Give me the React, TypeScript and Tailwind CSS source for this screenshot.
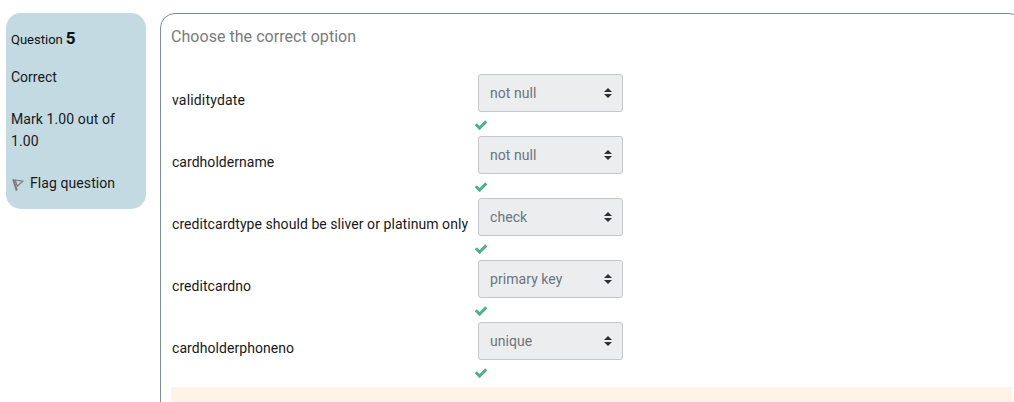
const rows = [
  { label: 'validitydate', value: 'not null', spacing: 'tracking-[0.17px]' },
  { label: 'cardholdername', value: 'not null', spacing: 'tracking-[0.04px]' },
  { label: 'creditcardtype should be sliver or platinum only', value: 'check', spacing: 'tracking-[0.06px]' },
  { label: 'creditcardno', value: 'primary key', spacing: 'tracking-[0.06px]' },
  { label: 'cardholderphoneno', value: 'unique', spacing: 'tracking-[0.06px]' },
];

function CheckIcon() {
  return (
    <svg viewBox="0 0 1792 1792" className="-ml-1 block h-[14px] w-[14px]" fill="#4bb288">
      <path d="M1671 566q0 40-28 68l-724 724-136 136q-28 28-68 28t-68-28l-136-136-362-362q-28-28-28-68t28-68l136-136q28-28 68-28t68 28l294 295 656-657q28-28 68-28t68 28l136 136q28 28 28 68z" />
    </svg>
  );
}

function FlagIcon() {
  return (
    <svg viewBox="0 0 14 14" className="mt-[3px] h-[14px] w-[14px] shrink-0" fill="none">
      <path d="M1.2 1.2 4.8 12.6" stroke="#777b7d" strokeWidth="2" />
      <path d="M3 2 10.8 3.2 5.3 8.3Z" fill="#cbd3d6" stroke="#777b7d" strokeWidth="1.2" />
    </svg>
  );
}

function Select({ value }: { value: string }) {
  return (
    <div className="flex h-[38px] w-[145px] items-center justify-between rounded-[3px] border border-[#c3c7ca] bg-[#ebedef] pr-[10px] pl-[11px] tracking-[0.06px] text-[#6b747c]">
      <span>{value}</span>
      <svg viewBox="0 0 8 10" className="h-[10px] w-[8px]" fill="#2b3036">
        <path d="M0 4 4 0 8 4ZM0 6 4 10 8 6Z" />
      </svg>
    </div>
  );
}

export default function App() {
  return (
    <div className="flex h-[402px] w-full items-start overflow-hidden bg-white pt-[13px] pl-[6px] font-['Roboto',sans-serif] text-[14px] leading-[22px] text-[#16191c]">
      <aside className="h-[196px] w-[140px] shrink-0 rounded-[15px] bg-[#c3dae2] pt-[14px] pl-[5px]">
        <h3 className="flex h-[22px] items-baseline gap-[3px] text-[13px] text-[#0d1114]">
          Question <span className="text-[17px] font-bold">5</span>
        </h3>
        <p className="mt-[17px]">Correct</p>
        <p className="mt-5 w-[120px] tracking-[0.09px]">Mark 1.00 out of 1.00</p>
        <div className="mt-5 flex h-[22px] items-center gap-[4px] pl-px tracking-[0.08px]">
          <FlagIcon />
          <span>Flag question</span>
        </div>
      </aside>
      <main className="ml-[14px] h-[480px] w-[864px] shrink-0 rounded-[15px] border border-[#7b8d99] pt-[11px] pl-[10px]">
        <p className="h-[24px] text-[16px] leading-[24px] tracking-[0.04px] text-[#777b7e]">Choose the correct option</p>
        <div className="mt-[25px]">
          {rows.map((row) => (
            <div key={row.label} className="flex h-[62px] pl-px">
              <span className={'w-[306px] shrink-0 pt-[15px] whitespace-nowrap ' + row.spacing}>{row.label}</span>
              <div className="flex flex-col gap-[6px]">
                <Select value={row.value} />
                <CheckIcon />
              </div>
            </div>
          ))}
        </div>
        <div className="mt-[3px] h-20 w-[841px] rounded-[2px] bg-[#fff3e8]" />
      </main>
    </div>
  );
}
